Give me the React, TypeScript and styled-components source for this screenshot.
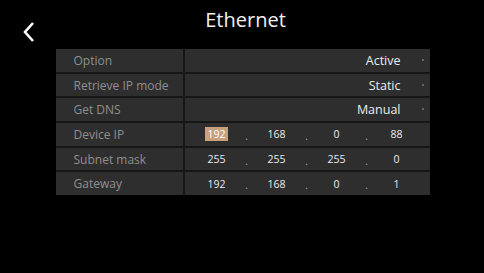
import React from "react";
import styled, { createGlobalStyle } from "styled-components";

const Global = createGlobalStyle`
  html, body {
    margin: 0;
    padding: 0;
    background: #000;
  }
  body {
    font-family: "Open Sans", "DejaVu Sans", sans-serif;
  }
`;

const Screen = styled.div`
  width: 484px;
  height: 273px;
  background: #000;
  display: flex;
  flex-direction: column;
  align-items: center;
`;

const Header = styled.div`
  width: 100%;
  height: 49px;
  position: relative;
  display: flex;
  justify-content: center;
`;

const Title = styled.h1`
  margin: 6px 0 0 7px;
  font-size: 20px;
  font-weight: 400;
  color: #f0f0f0;
  line-height: 28px;
`;

const Back = styled.div`
  position: absolute;
  left: 22px;
  top: 21px;
  width: 14px;
  height: 22px;
`;

const Table = styled.div`
  width: 374px;
  margin-left: 1px;
  display: grid;
  grid-template-columns: 127px 1fr;
  background: #161616;
  row-gap: 2px;
  column-gap: 2px;
`;

const Label = styled.div`
  height: 22.7px;
  background: #2e2e2e;
  color: #8e8e8e;
  font-size: 12px;
  display: flex;
  align-items: center;
  padding-left: 18px;
`;

const Value = styled.div`
  height: 22.7px;
  background: #2e2e2e;
  color: #ececec;
  font-size: 12.5px;
  display: flex;
  align-items: center;
  justify-content: flex-end;
  padding-right: 29px;
  position: relative;
`;

const Arrow = styled.span`
  position: absolute;
  right: 6px;
  top: 10px;
  width: 2px;
  height: 2px;
  border-radius: 1px;
  background: #777;
`;

const IpCell = styled.div`
  height: 22.7px;
  background: #2e2e2e;
  display: grid;
  grid-template-columns: 44px 16px 44px 16px 44px 16px 44px;
  align-items: center;
  padding-left: 10px;
  font-size: 10.5px;
  color: #ececec;
`;

const Octet = styled.span<{ $sel?: boolean }>`
  justify-self: center;
  padding: 0 2px;
  line-height: 14px;
  background: ${(p) => (p.$sel ? "#c9a07c" : "transparent")};
  color: ${(p) => (p.$sel ? "#fff" : "#ececec")};
`;

const Dot = styled.span`
  justify-self: center;
  color: #aaa;
  font-size: 10px;
  padding-top: 3px;
`;

const dropdowns = [
  ["Option", "Active"],
  ["Retrieve IP mode", "Static"],
  ["Get DNS", "Manual"],
];

const ips: [string, string[], number?][] = [
  ["Device IP", ["192", "168", "0", "88"], 0],
  ["Subnet mask", ["255", "255", "255", "0"]],
  ["Gateway", ["192", "168", "0", "1"]],
];

const App: React.FC = () => {
  return (
    <Screen>
      <Global />
      <Header>
        <Back>
          <svg width="14" height="22" viewBox="0 0 14 22">
            <path d="M11 2 L3 11 L11 20" stroke="#fff" strokeWidth="2.6" fill="none" strokeLinejoin="miter" />
          </svg>
        </Back>
        <Title>Ethernet</Title>
      </Header>
      <Table>
        {dropdowns.map(([l, v]) => (
          <React.Fragment key={l}>
            <Label>{l}</Label>
            <Value>
              {v}
              <Arrow />
            </Value>
          </React.Fragment>
        ))}
        {ips.map(([l, parts, sel]) => (
          <React.Fragment key={l}>
            <Label>{l}</Label>
            <IpCell>
              {parts.map((p, i) => (
                <React.Fragment key={i}>
                  <Octet $sel={sel === i}>{p}</Octet>
                  {i < 3 && <Dot>.</Dot>}
                </React.Fragment>
              ))}
            </IpCell>
          </React.Fragment>
        ))}
      </Table>
    </Screen>
  );
};

export default App;
